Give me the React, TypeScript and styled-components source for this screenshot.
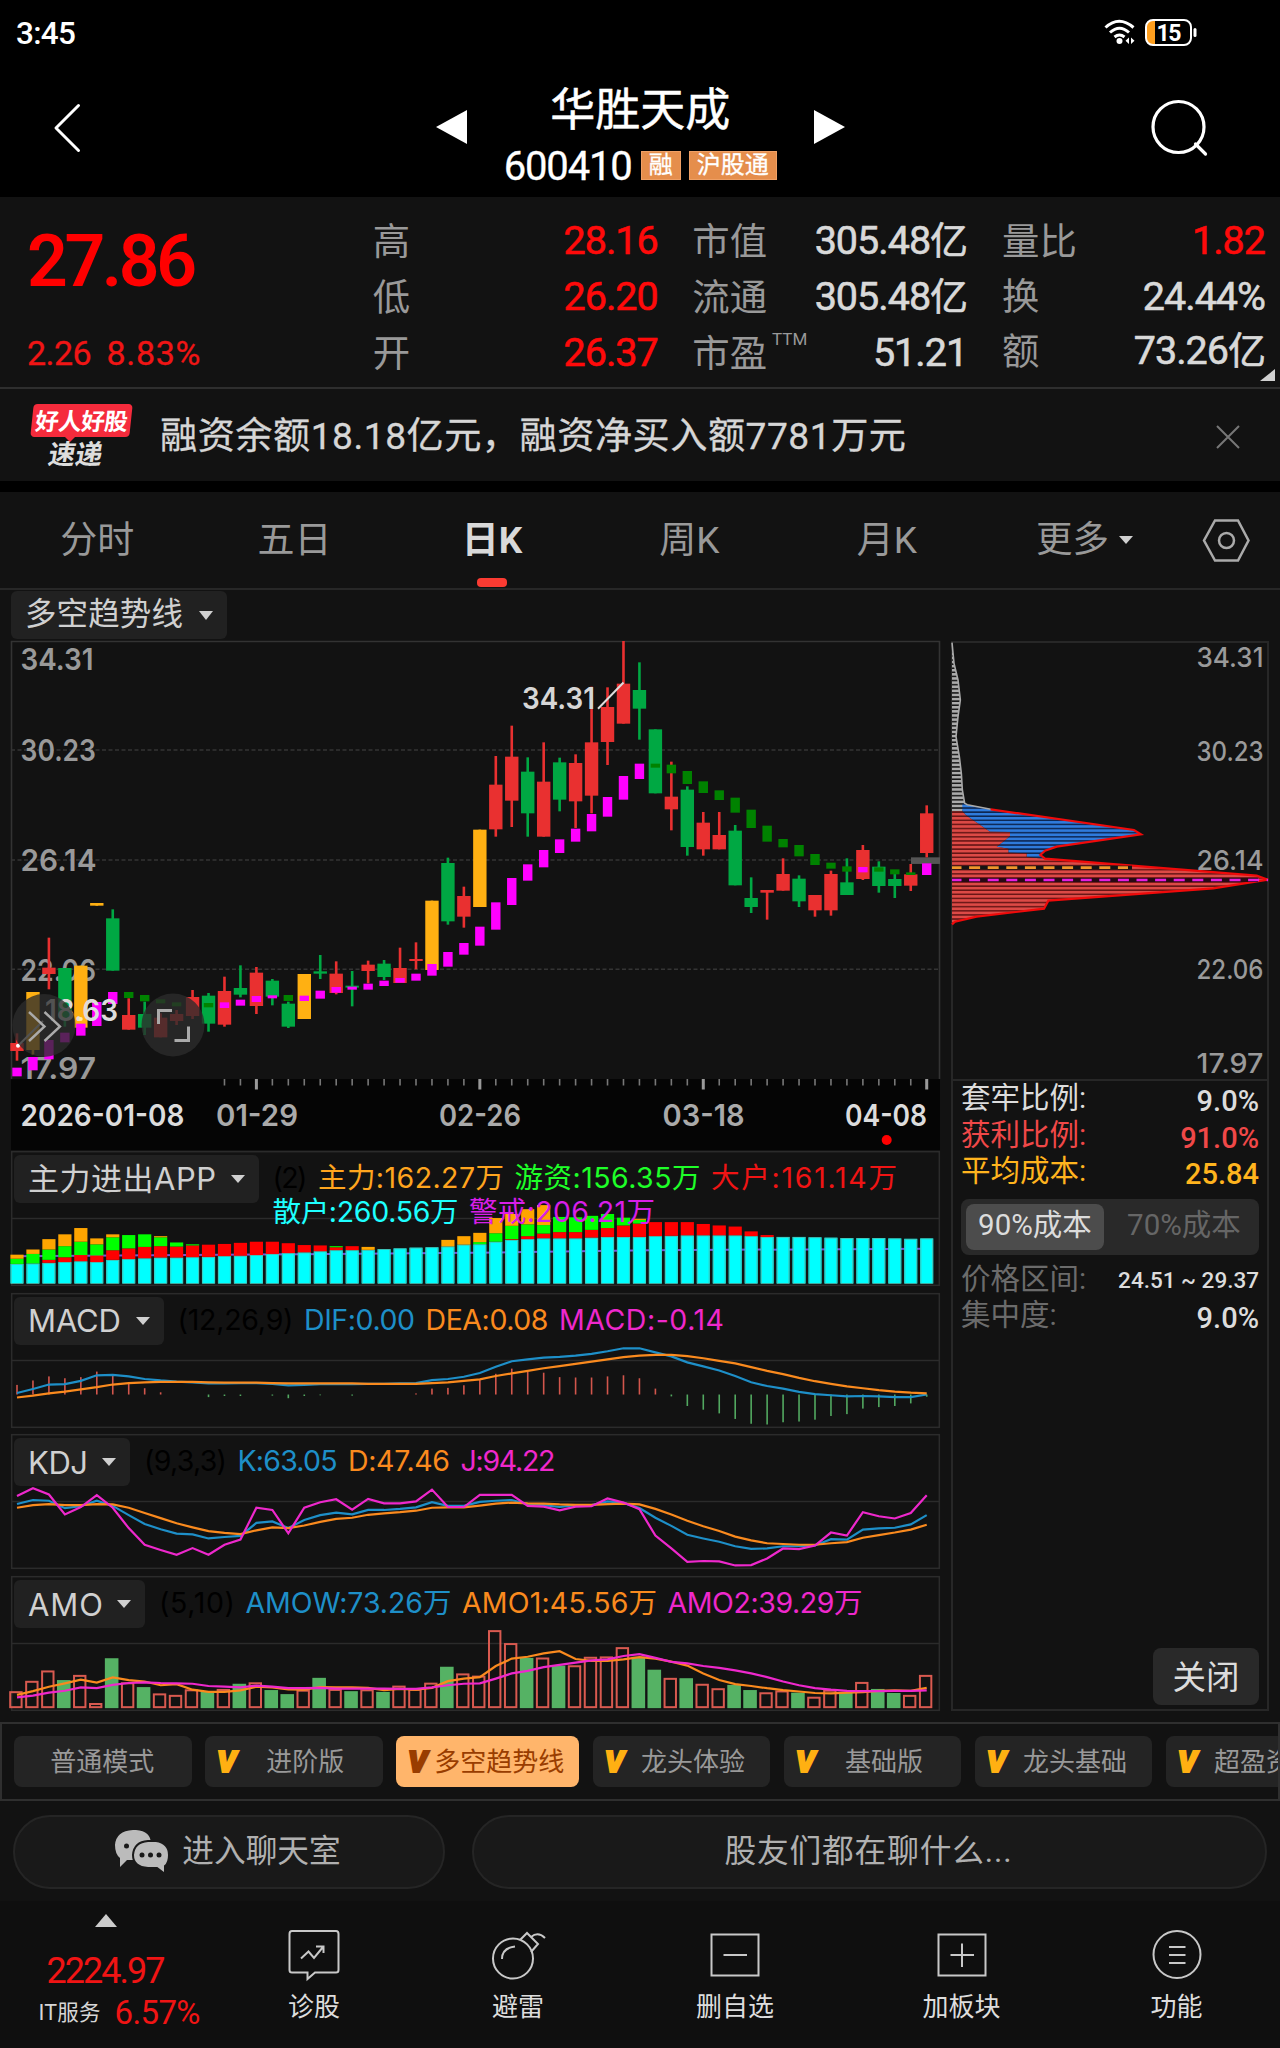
import React, { useLayoutEffect, useRef } from "react";
import styled, { createGlobalStyle } from "styled-components";

const CJK = '"Noto Sans CJK SC", sans-serif';
const DIN = `Roboto, ${CJK}`;
const GEO = `Inter, ${CJK}`;

const Global = createGlobalStyle`
  * { box-sizing: border-box; }
  html, body { margin: 0; background: #121212; }
  body { width: 1280px; height: 2048px; overflow: hidden; font-family: ${DIN}; color: #d6d6d6; }
  svg { display: block; }
`;

const Screen = styled.div`
  width: 1280px; height: 2048px; overflow: hidden;
  display: flex; flex-direction: column; background: #121212;
`;

/* Text whose tracking is adjusted so that it fills a given width. */
const FitSpan = styled.span<{ $w: number; $c?: string; $s?: number; $wt?: number; $f?: string; $lh?: number }>`
  display: inline-block; flex: none; width: ${p => p.$w}px; white-space: nowrap;
  color: ${p => p.$c ?? "inherit"};
  font-size: ${p => (p.$s ? p.$s + "px" : "inherit")};
  font-weight: ${p => p.$wt ?? "inherit"};
  font-family: ${p => p.$f ?? "inherit"};
  line-height: ${p => (p.$lh ? p.$lh + "px" : "inherit")};
`;
type FitProps = { w: number; c?: string; s?: number; wt?: number; f?: string; lh?: number; children: string };
function Fit({ w, c, s, wt, f, lh, children }: FitProps) {
  const ref = useRef<HTMLSpanElement>(null);
  useLayoutEffect(() => {
    const el = ref.current!;
    const range = document.createRange();
    range.selectNodeContents(el);
    el.style.letterSpacing = "0px";
    const natural = range.getBoundingClientRect().width;
    el.style.letterSpacing = `${(w - natural) / (children.length - 1)}px`;
  }, [w, children]);
  return <FitSpan ref={ref} $w={w} $c={c} $s={s} $wt={wt} $f={f} $lh={lh}>{children}</FitSpan>;
}

/* ---------- header ---------- */
const Header = styled.header`height: 197px; background: #000; color: #fff; display: flex; flex-direction: column;`;
const StatusBar = styled.div`
  height: 66px; padding: 0 82px 0 16px; display: flex; align-items: center; justify-content: space-between;
  font-weight: 500;
`;
const StatusIcons = styled.div`display: flex; align-items: center; gap: 9px; padding-bottom: 2px;`;
const TitleBar = styled.div`
  height: 131px; padding: 0 71px 0 52px; display: grid; align-items: center;
  grid-template-columns: 30px 354px 31px 346.5px 31px 306.5px 58px;
`;
const TitleIcon = styled.div<{ $col: number; $pt?: number }>`grid-column: ${p => p.$col}; align-self: start; padding-top: ${p => p.$pt ?? 0}px;`;
const TitleText = styled.div`grid-column: 4; align-self: start; display: flex; flex-direction: column; align-items: center; padding-top: 12px;`;
const Name = styled.div`height: 65px; line-height: 66px; font-size: 45px; font-weight: 400; -webkit-text-stroke: 0.5px #fff;`;
const CodeRow = styled.div`display: flex; align-items: center; gap: 8px; height: 46px; -webkit-text-stroke: 0.3px;`;
const Badge = styled.span<{ $w: number }>`
  width: ${p => p.$w}px; height: 29px; background: #e58e4c; border: 1px solid #efa065; color: #fff;
  display: flex; align-items: center; justify-content: center; font-size: 24px; line-height: 27px; margin-top: -2px;
`;

/* ---------- quote ---------- */
const Quote = styled.section`
  height: 192px; border-bottom: 2px solid #2e2e2e; display: flex; padding: 14px 15px 0 27px; position: relative;
`;
const PriceCol = styled.div`width: 346px; color: #f81010; display: flex; flex-direction: column;`;
const PriceBig = styled.div`height: 99px; line-height: 101px; color: #ff0000;`;
const PriceSub = styled.div`height: 86px; line-height: 87px; display: flex; gap: 15px; color: #f01515; -webkit-text-stroke: 0.3px;`;
const StatCol = styled.div<{ $w: number; $gap: number }>`width: ${p => p.$w}px; margin-right: ${p => p.$gap}px;`;
const StatRow = styled.div<{ $h?: number }>`
  height: ${p => p.$h ?? 56}px; line-height: ${p => p.$h ?? 56}px; display: flex; justify-content: space-between;
`;
const StatName = styled.span`font-size: 37.4px; color: #999; font-family: ${CJK};`;
const Sup = styled.sup`
  font-size: 17px; line-height: 16px; font-family: Roboto, sans-serif; vertical-align: 22px; margin-left: 5px;
`;
const StatValue = styled.span<{ $red?: boolean }>`
  color: ${p => (p.$red ? "#ff0a0a" : "#d9d9d9")}; font-size: 39.5px; letter-spacing: -1px;
  padding-top: 1.5px; -webkit-text-stroke: 0.6px;
  span { font-size: 38px; }
`;
const Corner = styled.i`
  position: absolute; right: 5px; bottom: 6px; width: 0; height: 0;
  border-left: 15px solid transparent; border-bottom: 12px solid #d0d0d0;
`;

/* ---------- news ---------- */
const News = styled.section`height: 92px; padding: 0 40px 0 30px; display: flex; align-items: center;`;
const Logo = styled.div`width: 103px; height: 64px; margin-right: 27px; padding-top: 1px; display: flex; flex-direction: column; align-items: center;`;
const LogoTag = styled.div`
  width: 99px; height: 33px; border-radius: 4px; background: #f52b3c; transform: skewX(-6deg);
  color: #fff; font: 700 23.5px/32px ${CJK}; text-align: center; letter-spacing: -0.5px; flex: none;
`;
const LogoTip = styled.i`border: 5px solid transparent; border-top-color: #f52b3c; border-bottom: 0; margin-left: -24px;`;
const LogoSub = styled.div`font: 700 27px/28px ${CJK}; transform: skewX(-10deg); color: #ddd; margin: -3px 12px 0 0;`;
const NewsText = styled.div`flex: 1; height: 92px; line-height: 94px; -webkit-text-stroke: 0.3px;`;
const CloseIcon = styled.svg`margin-top: 3px;`;
const Gap = styled.div`height: 11px; background: #000;`;

/* ---------- tabs ---------- */
const Tabs = styled.nav`height: 98px; border-bottom: 2px solid #272727; display: flex;`;
const Tab = styled.div<{ $on?: boolean }>`
  width: 197.4px; height: 96px; display: flex; flex-direction: column; align-items: center; padding-right: 3px;
  font-size: 37px; line-height: 98px; color: ${p => (p.$on ? "#d9d9d9" : "#999")}; font-weight: ${p => (p.$on ? 700 : 400)};
`;
const TabMark = styled.i`width: 30px; height: 9px; border-radius: 4px; background: #fb3b32; margin-top: -12px; flex: none;`;
const More = styled.div`padding-left: 49px; width: 214px; display: flex; align-items: center; font-size: 36.5px; line-height: 98px; color: #999; gap: 10px;`;
const Caret = styled.i<{ $w?: number; $h?: number }>`
  border: ${p => (p.$w ?? 14) / 2}px solid transparent; border-top: ${p => p.$h ?? 8}px solid #d0d0d0; border-bottom: 0; flex: none;
`;

/* ---------- chart area ---------- */
const Body = styled.main`height: 1121px; display: flex; padding-left: 11px; gap: 11px; flex: none;`;
const Left = styled.div`width: 929px; display: flex; flex-direction: column; flex: none;`;
const Chip = styled.div<{ $w: number; $h: number; $p: number }>`
  width: ${p => p.$w}px; height: ${p => p.$h}px; padding: 0 ${p => p.$p}px; border-radius: 6px; background: #212121; flex: none;
  display: flex; align-items: center; justify-content: space-between; white-space: nowrap; color: #d0d0d0;
`;
const ChartHead = styled.div`height: 51px; padding-top: 1px;`;
const Panels = styled.div`display: flex; flex-direction: column; gap: 6.7px; padding-top: 1px;`;
const Panel = styled.div`height: 135px; display: grid; flex: none;`;
const Layer = styled.div`grid-area: 1 / 1; min-width: 0;`;
const Legend = styled.div`display: flex; padding: 4px 0 0 3px; height: 52px; align-items: flex-start; font-family: ${GEO}; font-size: 28.5px;`;
const LegendLines = styled.div`margin-left: 14px; padding-top: 5px;`;
const LegendLine = styled.div`display: flex; gap: 10.5px; height: 34px; line-height: 36px;`;

const Side = styled.aside`
  width: 318px; height: 1070px; margin-top: 51px; border: 2px solid #272727; display: flex; flex-direction: column;
`;
const Facts = styled.div`border-top: 2px solid #272727; padding: 0 8px 0 8px; flex: 1; display: flex; flex-direction: column;`;
const Fact = styled.div<{ $c?: string; $dim?: boolean; $s?: number }>`
  height: 36.5px; line-height: 35px; display: flex; justify-content: space-between; font-size: 29.5px; flex: none;
  color: ${p => p.$c ?? "#dcdcdc"};
  span:first-child { color: ${p => (p.$dim ? "#6b6b6b" : "inherit")}; }
  span:last-child { font-weight: 500; font-size: ${p => p.$s ?? 29}px; padding-top: ${p => (p.$s ? 1 : 3)}px; }
`;
const Toggle = styled.div`height: 56px; margin: 8px 0 7px; border-radius: 8px; background: #292929; padding: 5px; display: flex; flex: none;`;
const Option = styled.div<{ $on?: boolean }>`
  width: ${p => (p.$on ? 138 : 150)}px; height: 46px; line-height: 43px; border-radius: 8px; text-align: center; font-size: 29.5px;
  background: ${p => (p.$on ? "#4c4c4c" : "none")}; color: ${p => (p.$on ? "#dcdcdc" : "#666")};
  padding-left: ${p => (p.$on ? 0 : 10)}px; flex: none;
`;
const CloseButton = styled.button`
  margin: auto 0 4px auto; width: 106px; height: 57px; border: 0; border-radius: 8px; background: #292929;
  color: #dcdcdc; font: 400 33.5px/52px ${CJK}; padding: 0 0 3px;
`;

/* ---------- modes ---------- */
const Modes = styled.div`
  height: 79px; margin-top: 11px; border: 2px solid #2f2f2f; padding-left: 12px; display: flex; align-items: center; gap: 13.3px;
  overflow: hidden; flex: none;
`;
const Mode = styled.div<{ $on?: boolean }>`
  width: ${p => (p.$on ? 183.5 : 177.7)}px; height: 51px; border-radius: 8px; flex: none; display: flex; align-items: center;
  background: ${p => (p.$on ? "#ffb56b" : "#242424")}; color: ${p => (p.$on ? "#993d00" : "#999")}; font-size: 26px;
`;
const Vip = styled.span<{ $on?: boolean }>`
  width: 39px; padding-left: 12px; margin-right: -15px; font: italic 900 30px/51px Roboto, sans-serif; flex: none;
  color: ${p => (p.$on ? "#993d00" : "#ffb012")}; -webkit-text-stroke: 2px currentColor;
`;
const ModeText = styled.span`flex: 1; text-align: center; white-space: nowrap; line-height: 52px; padding-right: 1px;`;

/* ---------- chat ---------- */
const Chat = styled.div`height: 100px; padding: 14px 13px 0; display: flex; gap: 27px; flex: none;`;
const Pill = styled.div<{ $w: number }>`
  width: ${p => p.$w}px; height: 74px; border: 2px solid #252525; border-radius: 37px; background: #191919; padding-right: 3px;
  display: flex; align-items: center; justify-content: center; gap: 12px; font-size: 31.7px; line-height: 74px; color: #b0b0b0;
`;

/* ---------- bottom nav ---------- */
const Nav = styled.footer`
  height: 147px; background: #0f0f0f; display: grid; flex: none;
  grid-template-columns: 212px 204px 204px 230px 223px 207px;
`;
const NavItem = styled.div`display: flex; flex-direction: column; align-items: center; padding-top: 27px; color: #ddd; font-size: 26px; line-height: 38px;`;
const NavIcon = styled.div`height: 60px;`;
const Index = styled.div`display: flex; flex-direction: column; align-items: center; padding-top: 13px;`;
const Up = styled.i`border: 11.5px solid transparent; border-bottom: 13px solid #ccc; border-top: 0;`;
const IndexRow = styled.div`height: 42px; line-height: 42px; display: flex; align-items: center; gap: 14px; padding-left: 27px;`;
const IndexTop = styled(IndexRow)`margin-top: 23px; padding-left: 0;`;

/* ---------- data ---------- */
const N = 58;
const cx = (i: number) => 17 + 15.96 * i;
const COLORS: Record<string, string> = { r: "#e93030", g: "#00a843", o: "#ffb012", m: "#ff00ff", d: "#008200" };

/* colour, high, body top, body bottom, low; thirds of a pixel below y = 640 */
const CANDLES: [string, number, number, number, number][] = [
  ["r", 1180, 1209, 1233, 1262], ["o", 1056, 1056, 1230, 1243], ["r", 893, 983, 1002, 1048], ["g", 984, 984, 1133, 1160],
  ["o", 977, 977, 1163, 1163], ["o", 789, 789, 797, 797], ["g", 808, 835, 992, 992], ["r", 1075, 1125, 1169, 1169],
  ["g", 1085, 1122, 1163, 1185], ["r", 1120, 1133, 1192, 1192], ["r", 1110, 1122, 1143, 1155], ["r", 1050, 1071, 1128, 1137],
  ["g", 1059, 1067, 1151, 1175], ["r", 1010, 1053, 1154, 1160], ["g", 976, 1044, 1064, 1072], ["r", 981, 998, 1098, 1122],
  ["g", 1017, 1022, 1070, 1096], ["g", 1085, 1091, 1160, 1164], ["o", 1002, 1002, 1137, 1137], ["g", 945, 994, 1001, 1017],
  ["r", 964, 1001, 1059, 1063], ["g", 993, 1037, 1043, 1099], ["r", 962, 974, 993, 1030], ["g", 960, 971, 1011, 1020],
  ["r", 923, 984, 1029, 1029], ["r", 907, 957, 963, 988], ["o", 782, 782, 990, 990], ["g", 653, 669, 844, 854],
  ["r", 740, 768, 830, 863], ["o", 569, 569, 801, 801], ["r", 348, 434, 568, 590], ["r", 257, 350, 482, 561],
  ["g", 352, 395, 520, 590], ["r", 307, 425, 590, 590], ["g", 353, 367, 479, 514], ["r", 343, 369, 484, 564],
  ["r", 140, 307, 467, 520], ["r", 142, 201, 306, 375], ["r", 3, 131, 251, 251], ["g", 67, 150, 206, 299],
  ["g", 268, 268, 460, 460], ["r", 365, 470, 508, 571], ["g", 439, 449, 621, 647], ["r", 516, 548, 628, 647],
  ["r", 516, 585, 628, 628], ["g", 555, 572, 736, 736], ["g", 712, 774, 801, 819], ["r", 750, 750, 758, 839],
  ["r", 655, 702, 752, 752], ["g", 706, 716, 784, 801], ["r", 765, 765, 811, 830], ["r", 692, 702, 811, 827],
  ["g", 655, 727, 765, 765], ["r", 615, 630, 717, 720], ["g", 664, 680, 738, 758], ["g", 700, 717, 738, 774],
  ["r", 672, 703, 737, 753], ["r", 496, 520, 639, 652],
];

const TREND: [number, string, number, number][] = [
  [0, "m", 1283, 1309], [1, "m", 1251, 1291], [2, "m", 1200, 1258], [3, "m", 1178, 1207], [4, "m", 1151, 1187], [5, "m", 1086, 1158],
  [6, "m", 1056, 1092], [7, "d", 1056, 1074], [8, "d", 1065, 1084], [9, "d", 1078, 1090], [10, "d", 1087, 1099], [12, "d", 1089, 1102],
  [13, "m", 1087, 1104], [14, "m", 1079, 1097], [15, "m", 1068, 1086], [16, "m", 1066, 1075], [17, "d", 1065, 1083], [18, "m", 1067, 1083],
  [19, "m", 1052, 1076], [20, "m", 1041, 1058], [21, "m", 1040, 1049], [22, "m", 1031, 1049], [23, "m", 1022, 1038], [24, "m", 1014, 1028],
  [25, "m", 1001, 1022], [26, "m", 972, 1007], [27, "m", 936, 980], [28, "m", 909, 944], [29, "m", 860, 917], [30, "m", 787, 869],
  [31, "m", 714, 795], [32, "m", 673, 722], [33, "m", 630, 682], [34, "m", 598, 639], [35, "m", 566, 605], [36, "m", 522, 574],
  [37, "m", 471, 530], [38, "m", 408, 479], [39, "m", 371, 417], [40, "d", 371, 383], [41, "d", 374, 400], [42, "d", 393, 432],
  [43, "d", 424, 459], [44, "d", 451, 480], [45, "d", 473, 518], [46, "d", 509, 564], [47, "d", 557, 605], [48, "d", 597, 622],
  [49, "d", 615, 649], [50, "d", 642, 675], [51, "d", 668, 686], [52, "d", 679, 695], [53, "m", 681, 697], [54, "d", 682, 695],
  [55, "d", 688, 703], [56, "d", 697, 705], [57, "m", 670, 705],
];

const ky = (v: number) => 640 + v / 3;
const py = (v: number) => 1140 + v / 2.7034;

/* tops of the stacked bars: cyan, red, green, orange */
const FLOW: number[][] = [
  [335, 335, 321, 310], [334, 334, 308, 296], [332, 324, 296, 268], [330, 317, 287, 255], [328, 311, 275, 238], [330, 312, 282, 266],
  [324, 298, 263, 255], [322, 293, 257], [320, 289, 255], [318, 287, 263, 260], [318, 288, 277], [317, 285, 282], [316, 283], [314, 281],
  [313, 278], [311, 275], [308, 275], [306, 279], [304, 284], [301, 285], [298, 290, 287], [298, 287], [297, 297, 297, 289], [295], [293],
  [291], [290], [288, 288, 288, 270], [283, 283, 283, 260], [282, 282, 276, 251], [275, 275, 252, 211], [270, 268, 232, 200],
  [268, 260, 228, 187], [266, 253, 230, 176], [266, 249, 208], [266, 249, 209], [264, 243, 205], [262, 238, 200], [262, 231, 210],
  [262, 226, 216, 213], [260, 222], [259, 222], [258, 222], [258, 227], [258, 231], [258, 234], [260, 247], [262, 257], [262], [262],
  [263], [264], [265], [265], [265], [266], [267], [266],
];
const FLOW_COLORS = ["#00ffff", "#ff0000", "#00ff00", "#ffa500"];

const MACD_BARS: Record<number, number> = {
  0: 661, 1: 649, 2: 638, 3: 643, 4: 640, 5: 625, 6: 637, 7: 656, 8: 670, 9: 681, 12: 694, 13: 691, 14: 691, 16: 690, 17: 697, 18: 691,
  19: 689, 21: 690, 25: 684, 26: 671, 27: 669, 28: 662, 29: 647, 30: 631, 31: 617, 32: 626, 33: 628, 34: 640, 35: 641, 36: 641, 37: 638,
  38: 635, 39: 643, 40: 671, 41: 692, 42: 718, 43: 728, 44: 738, 45: 753, 46: 766, 47: 768, 48: 762, 49: 760, 50: 755, 51: 745, 52: 740,
  53: 725, 54: 721, 55: 718, 56: 711, 57: 693,
};
const DIF = [683, 672, 660, 659, 650, 635, 634, 638, 645, 649, 652, 654, 657, 657, 656, 656, 658, 662, 661, 659, 659, 659, 658, 658, 657, 656,
  648, 645, 639, 629, 612, 597, 592, 587, 585, 582, 577, 570, 562, 562, 573, 584, 600, 611, 622, 637, 654, 664, 671, 680, 686, 689, 692, 691,
  692, 694, 694, 687];
const DEA = [695, 690, 684, 679, 673, 667, 660, 656, 654, 653, 653, 653, 654, 655, 655, 655, 656, 657, 657, 657, 657, 657, 658, 658, 658, 658,
  656, 654, 650, 646, 637, 630, 623, 616, 610, 604, 598, 592, 586, 582, 580, 580, 583, 589, 596, 603, 613, 623, 632, 642, 651, 658, 665, 670,
  675, 679, 682, 684];
const K = [985, 974, 976, 996, 991, 976, 990, 1015, 1039, 1053, 1065, 1067, 1078, 1074, 1071, 1036, 1032, 1050, 1028, 1015, 1008, 1013, 1001,
  1001, 998, 994, 980, 990, 990, 979, 976, 974, 985, 988, 993, 988, 988, 978, 982, 996, 1022, 1044, 1068, 1078, 1087, 1099, 1106, 1105, 1099,
  1099, 1097, 1080, 1081, 1054, 1051, 1049, 1040, 1015];
const D = [995, 988, 985, 988, 988, 985, 986, 995, 1009, 1023, 1037, 1048, 1058, 1063, 1066, 1056, 1048, 1050, 1043, 1033, 1025, 1022, 1014,
  1010, 1007, 1003, 995, 994, 994, 989, 984, 981, 983, 984, 986, 987, 987, 985, 984, 986, 998, 1013, 1030, 1045, 1058, 1073, 1083, 1091, 1093,
  1095, 1095, 1091, 1088, 1076, 1069, 1062, 1054, 1041];
const J = [963, 942, 959, 1013, 993, 961, 995, 1050, 1095, 1109, 1122, 1104, 1122, 1095, 1081, 995, 1001, 1064, 995, 980, 972, 1000, 971, 983,
  983, 978, 946, 993, 993, 960, 960, 960, 990, 992, 1002, 992, 991, 970, 981, 999, 1070, 1105, 1141, 1139, 1140, 1151, 1150, 1132, 1105, 1107,
  1097, 1062, 1070, 1007, 1018, 1024, 1009, 961];
const AMO = "r1490 r1462 r1434 g1460 r1446 r1522 g1401 r1466 g1479 r1496 r1500 r1485 g1490 r1484 g1470 r1466 g1487 g1498 r1486 g1454 r1484 g1490 r1485 g1492 r1475 r1484 r1467 g1424 r1442 r1448 r1325 r1360 g1400 r1399 g1421 r1420 r1397 r1396 r1371 g1397 g1432 r1454 g1455 r1470 r1482 g1473 g1487 r1493 r1488 g1494 r1505 r1486 g1493 r1465 g1484 g1495 r1500 r1446".split(" ");
const AMO1 = [1500, 1490, 1478, 1469, 1459, 1467, 1453, 1460, 1464, 1474, 1471, 1486, 1492, 1492, 1488, 1478, 1480, 1485, 1486, 1479, 1480, 1480,
  1481, 1487, 1484, 1486, 1481, 1463, 1456, 1452, 1422, 1402, 1397, 1388, 1382, 1403, 1408, 1408, 1404, 1398, 1402, 1410, 1421, 1442, 1460,
  1471, 1476, 1482, 1487, 1491, 1495, 1496, 1494, 1493, 1489, 1488, 1489, 1481];
const AMO2 = [1507, 1502, 1494, 1489, 1480, 1482, 1473, 1468, 1466, 1468, 1469, 1470, 1476, 1478, 1480, 1475, 1478, 1482, 1482, 1481, 1483, 1483,
  1483, 1483, 1484, 1484, 1480, 1474, 1470, 1469, 1456, 1442, 1435, 1425, 1419, 1413, 1407, 1404, 1395, 1390, 1400, 1411, 1415, 1422, 1427,
  1434, 1442, 1452, 1464, 1474, 1482, 1486, 1489, 1490, 1490, 1489, 1489, 1488];

const BLUE = "#1e8fc8", ORANGE = "#fa8a1e", PINK = "#ee28cc";

function Series({ data, color }: { data: number[]; color: string }) {
  return <polyline fill="none" stroke={color} strokeWidth={2.2} points={data.map((v, i) => `${cx(i)},${py(v)}`).join(" ")} />;
}

const AxisText = styled.text<{ $c: string; $s?: number; $w?: number }>`
  font-family: Inter, sans-serif; font-size: ${p => p.$s ?? 30.5}px; font-weight: ${p => p.$w ?? 600}; fill: ${p => p.$c};
`;
function Label({ x, y, w, c = "#999", s, wt, children }: { x: number; y: number; w: number; c?: string; s?: number; wt?: number; children: string }) {
  return <AxisText x={x} y={y} $c={c} $s={s} $w={wt} textLength={w} lengthAdjust="spacingAndGlyphs">{children}</AxisText>;
}

function CandleChart() {
  return (
    <svg width={929} height={509} viewBox="11 641 929 509" overflow="visible">
      <rect x={11} y={1079} width={929} height={71} fill="#050505" />
      <path d="M11.5 1079V641.5H939.5V1079" fill="none" stroke="#333" strokeWidth={1.6} />
      {[330, 660, 988].map(v => (
        <line key={v} x1={11} x2={940} y1={ky(v)} y2={ky(v)} stroke="#343434" strokeWidth={1.5} strokeDasharray="4 2.5" />
      ))}
      <Label x={20.5} y={669.7} w={73}>34.31</Label>
      <Label x={20.5} y={761.3} w={75.5}>30.23</Label>
      <Label x={20.5} y={871.3} w={76}>26.14</Label>
      <Label x={20.5} y={980.7} w={75.5}>22.06</Label>
      <Label x={20.5} y={1078.7} w={75.5}>17.97</Label>
      <rect x={911} y={ky(652)} width={29} height={6.6} fill="#555" />
      {CANDLES.map(([c, hi, top, bot, lo], i) => (
        <g key={i} fill={COLORS[c]}>
          <rect x={cx(i) - 1.3} y={ky(hi)} width={2.6} height={(lo - hi) / 3} />
          <rect x={cx(i) - 6.7} y={ky(top)} width={13.4} height={(bot - top) / 3} />
        </g>
      ))}
      {TREND.map(([i, c, top, bot]) => (
        <rect key={i} x={cx(i) - 4.7} y={ky(top)} width={9.4} height={(bot - top) / 3} fill={COLORS[c]} />
      ))}
      <Label x={522} y={709} w={73} c="#d6d6d6">34.31</Label>
      <line x1={598} y1={708.7} x2={623.5} y2={682.5} stroke="#ddd" strokeWidth={2} />
      <Label x={45} y={1020.7} w={73} c="#dcdcdc">18.63</Label>
      <line x1={18} y1={1045.7} x2={43} y2={1021} stroke="#ddd" strokeWidth={2} />
      <circle cx={18} cy={1045.7} r={2} fill="#fff" />
      <circle cx={80.7} cy={1019} r={2} fill="#ffe9a8" />
      <circle cx={44} cy={1025.5} r={31.5} fill="#2b2b2b" fillOpacity={0.78} />
      <path d="M29 1012L44.5 1026.5L29 1041M44.5 1012L60 1026.5L44.5 1041" fill="none" stroke="#aaa" strokeWidth={2.4} />
      <circle cx={173} cy={1025} r={31.5} fill="#2b2b2b" fillOpacity={0.78} />
      <path d="M158.5 1024V1010.5H172M188.5 1026.5V1040.5H174.5" fill="none" stroke="#aaa" strokeWidth={3} />
      {Array.from({ length: N - 13 }, (_, k) => k + 13).map(i => {
        const major = (i - 15) % 14 === 0;
        return <rect key={i} x={cx(i) - (major ? 1.5 : 0.8)} y={1079} width={major ? 3 : 1.6} height={major ? 10.5 : 6.5} fill={major ? "#999" : "#777"} />;
      })}
      <Label x={20.5} y={1125.7} w={164} c="#dcdcdc">2026-01-08</Label>
      <Label x={216} y={1125.7} w={82} c="#aaa">01-29</Label>
      <Label x={439} y={1125.7} w={82} c="#aaa">02-26</Label>
      <Label x={662.5} y={1125.7} w={82} c="#aaa">03-18</Label>
      <Label x={845} y={1125.7} w={82} c="#dcdcdc">04-08</Label>
      <circle cx={886.7} cy={1140} r={5} fill="#ff0000" />
    </svg>
  );
}

function Frame({ top, children }: { top: number; children: React.ReactNode }) {
  return (
    <svg width={929} height={135} viewBox={`11 ${top} 929 135`} overflow="visible">
      <rect x={11.7} y={top + 0.7} width={927.6} height={133.6} fill="none" stroke="#2b2b2b" strokeWidth={1.5} />
      <line x1={11} x2={940} y1={top + 67.5} y2={top + 67.5} stroke="#2b2b2b" strokeWidth={1.5} />
      {children}
    </svg>
  );
}

function FlowChart() {
  const base = py(388);
  return (
    <Frame top={1151}>
      <polyline points={`11,${py(314)} 300,${py(309)} 500,${py(304)} 650,${py(298)} 926,${py(294)}`} fill="none" stroke="#7a52d8" strokeWidth={2} />
      {FLOW.map((tops, i) => {
        let from = base;
        return tops.map((t, k) => {
          const y = py(t), h = from - y;
          from = y;
          return h > 0 ? <rect key={`${i}-${k}`} x={cx(i) - 6.6} y={y} width={13.2} height={h} fill={FLOW_COLORS[k]} /> : null;
        });
      })}
      {FLOW.map(([t], i) => (
        <rect key={i} x={cx(i) - 5.8} y={py(t) + 0.5} width={11.6} height={base - py(t) - 0.5} fill="none" stroke="#55b5a5" strokeWidth={0.7} />
      ))}
    </Frame>
  );
}

function MacdChart() {
  return (
    <Frame top={1292.6}>
      {Object.entries(MACD_BARS).map(([k, v]) => {
        const x = cx(Number(k)), a = Math.min(v, 687), b = Math.max(v, 687);
        return <rect key={k} x={x - 0.8} y={py(a)} width={1.6} height={py(b) - py(a)} fill={v < 687 ? "#d2564c" : "#52a860"} />;
      })}
      <Series data={DIF} color={BLUE} />
      <Series data={DEA} color={ORANGE} />
    </Frame>
  );
}

function KdjChart() {
  return (
    <Frame top={1434.3}>
      <Series data={K} color={BLUE} />
      <Series data={D} color={ORANGE} />
      <Series data={J} color={PINK} />
    </Frame>
  );
}

function AmoChart() {
  const base = py(1536);
  return (
    <Frame top={1576}>
      {AMO.map((s, i) => {
        const y = py(Number(s.slice(1))), x = cx(i) - 1.1;
        return s[0] === "g"
          ? <rect key={i} x={x - 6.8} y={y} width={13.6} height={base - y} fill="#55b264" />
          : <rect key={i} x={x - 5.7} y={y + 1} width={11.4} height={base - y - 2} fill="none" stroke="#d95a50" strokeWidth={2} />;
      })}
      <Series data={AMO1} color={ORANGE} />
      <Series data={AMO2} color={PINK} />
    </Frame>
  );
}

const poly = (pts: number[][]) => pts.map(([x, y]) => `${930 + x / 3},${640 + y / 3}`).join(" ");
const GREY_EDGE = [[66, 8], [72, 70], [84, 120], [91, 180], [84, 230], [78, 290], [88, 350], [94, 400], [97, 450], [104, 490], [112, 494], [182, 508]];
const RED_EDGE = [[182, 508], [612, 570], [633, 583], [380, 620], [345, 632], [331, 645], [345, 656], [980, 707], [1014, 719], [850, 745], [355, 782], [342, 806], [140, 830], [75, 845], [66, 853]];
const INNER = [[97, 514], [108, 526], [125, 538], [145, 551], [180, 575], [240, 576], [240, 588], [225, 601], [200, 620], [235, 626], [235, 638], [290, 640], [290, 651], [340, 656]];

function Distribution() {
  const stripes = (id: string, bright: string, dark: string) => (
    <pattern id={id} x={0} y={640 + 679 / 3} width={8} height={37 / 9} patternUnits="userSpaceOnUse">
      <rect width={8} height={37 / 9} fill={dark} />
      <rect width={8} height={2.6} fill={bright} />
    </pattern>
  );
  return (
    <svg width={314} height={436} viewBox="953 643 314 436" overflow="visible">
      <defs>
        {stripes("grey", "#aaa", "#141414")}
        {stripes("red", "#dc4a46", "#641414")}
        {stripes("blue", "#2f7bdc", "#0c2550")}
      </defs>
      <polygon points={poly([[66, 8], ...GREY_EDGE.slice(0, 10), [97, 514], [66, 514]])} fill="url(#grey)" />
      <polygon points={poly([[97, 490], [112, 494], ...RED_EDGE.slice(0, 6), ...INNER.slice().reverse()])} fill="url(#blue)" />
      <polygon points={poly([[66, 514], ...INNER, ...RED_EDGE.slice(6)])} fill="url(#red)" />
      <polyline points={poly(GREY_EDGE)} fill="none" stroke="#aaa" strokeWidth={1.6} />
      <polyline points={poly(RED_EDGE)} fill="none" stroke="#f00a0a" strokeWidth={2.2} />
      <rect x={952} y={ky(677)} width={180} height={4} fill="#141414" />
      <line x1={952} x2={1128} y1={ky(683)} y2={ky(683)} stroke="#f0962c" strokeWidth={2.6} strokeDasharray="11 7.6" strokeDashoffset={1.5} />
      <rect x={952} y={ky(714)} width={306} height={4} fill="#2a0a14" />
      <line x1={952} x2={1268} y1={ky(720)} y2={ky(720)} stroke="#e81ee0" strokeWidth={2.6} strokeDasharray="11 7.6" strokeDashoffset={1.5} />
      {[["34.31", 666.5], ["30.23", 760.5], ["26.14", 870.3], ["22.06", 979], ["17.97", 1072.5]].map(([t, y]) => (
        <Label key={t} x={1196.5} y={y as number} w={67} s={27} wt={450} c="#9a9a9a">{t as string}</Label>
      ))}
    </svg>
  );
}

const MODES: [string, boolean, boolean][] = [
  ["普通模式", false, false], ["进阶版", true, false], ["多空趋势线", true, true], ["龙头体验", true, false],
  ["基础版", true, false], ["龙头基础", true, false], ["超盈资金", true, false],
];

type LegendItem = [string, number, string];
function IndicatorPanel({ name, nameW, chipW, lines, children }: { name: string; nameW: number; chipW: number; lines: LegendItem[][]; children: React.ReactNode }) {
  return (
    <Panel>
      <Layer>{children}</Layer>
      <Layer>
        <Legend>
          <Chip $w={chipW} $h={48} $p={14}>
            <Fit w={nameW} s={31} lh={47}>{name}</Fit>
            <Caret $w={14} $h={8} />
          </Chip>
          <LegendLines>
            {lines.map((line, k) => (
              <LegendLine key={k}>
                {line.map(([t, w, c]) => <Fit key={t} w={w} c={c}>{t}</Fit>)}
              </LegendLine>
            ))}
          </LegendLines>
        </Legend>
      </Layer>
    </Panel>
  );
}

const line = { fill: "none", stroke: "#c8c8c8", strokeWidth: 2 };

export default function App() {
  return (
    <Screen>
      <Global />
      <Header>
        <StatusBar>
          <Fit w={60} s={31.5}>3:45</Fit>
          <StatusIcons>
            <svg width={32} height={26} viewBox="0 0 32 26" fill="none" stroke="#fff" strokeWidth={3}>
              <path d="M1.5 8.5Q15 -4 29.5 8.5M6 13.5Q15.5 5 25 13.5M10.5 18Q15.5 14 20.5 18" />
              <circle cx="15.5" cy="22" r="3" fill="#fff" stroke="none" />
              <path d="M25 18.5V25L21.5 21.8ZM27 18.5V25L30.5 21.8Z" fill="#fff" stroke="none" />
            </svg>
            <svg width={53} height={27} viewBox="0 0 53 27">
              <path d="M10 1.5H8Q1.5 1.5 1.5 8V19Q1.5 25.5 8 25.5H10Z" fill="#ff9f1e" />
              <rect x="1" y="1" width="45" height="25" rx="7" fill="none" stroke="#fff" strokeWidth="2" />
              <rect x="48.5" y="9" width="3" height="9" rx="1.5" fill="#fff" />
              <text x="11.5" y="21.5" fontFamily="Roboto" fontSize="23" fontWeight="700" fill="#fff" textLength="25">15</text>
            </svg>
          </StatusIcons>
        </StatusBar>
        <TitleBar>
          <TitleIcon $col={1} $pt={37}>
            <svg width={30} height={50} viewBox="0 0 30 50"><path d="M26.5 2.5L4 25L26.5 47.5" fill="none" stroke="#fff" strokeWidth={3} strokeLinecap="round" strokeLinejoin="round" /></svg>
          </TitleIcon>
          <TitleIcon $col={3} $pt={44}><svg width={31} height={34}><path d="M31 0V34L0 17Z" fill="#fff" /></svg></TitleIcon>
          <TitleText>
            <Name>华胜天成</Name>
            <CodeRow>
              <Fit w={129} s={40}>600410</Fit>
              <Badge $w={40}>融</Badge>
              <Badge $w={88}>沪股通</Badge>
            </CodeRow>
          </TitleText>
          <TitleIcon $col={5} $pt={44}><svg width={31} height={34}><path d="M0 0V34L31 17Z" fill="#fff" /></svg></TitleIcon>
          <TitleIcon $col={7} $pt={33}>
            <svg width={58} height={58} viewBox="0 0 58 58" fill="none" stroke="#fff" strokeWidth={3.2}>
              <circle cx={27.5} cy={28} r={25.5} /><path d="M44.5 45L54.5 55" strokeLinecap="round" />
            </svg>
          </TitleIcon>
        </TitleBar>
      </Header>

      <Quote>
        <PriceCol>
          <PriceBig><Fit w={170} s={71.5} wt={600}>27.86</Fit></PriceBig>
          <PriceSub><Fit w={64.5} s={34}>2.26</Fit><Fit w={94} s={34}>8.83%</Fit></PriceSub>
        </PriceCol>
        <StatCol $w={285} $gap={34.5}>
          <StatRow><StatName>高</StatName><StatValue $red>28.16</StatValue></StatRow>
          <StatRow><StatName>低</StatName><StatValue $red>26.20</StatValue></StatRow>
          <StatRow><StatName>开</StatName><StatValue $red>26.37</StatValue></StatRow>
        </StatCol>
        <StatCol $w={275} $gap={35}>
          <StatRow><StatName>市值</StatName><StatValue>305.48<span>亿</span></StatValue></StatRow>
          <StatRow><StatName>流通</StatName><StatValue>305.48<span>亿</span></StatValue></StatRow>
          <StatRow><StatName>市盈<Sup>TTM</Sup></StatName><StatValue>51.21</StatValue></StatRow>
        </StatCol>
        <StatCol $w={263} $gap={0}>
          <StatRow><StatName>量比</StatName><StatValue $red>1.82</StatValue></StatRow>
          <StatRow $h={55}><StatName>换</StatName><StatValue>24.44%</StatValue></StatRow>
          <StatRow $h={54}><StatName>额</StatName><StatValue>73.26<span>亿</span></StatValue></StatRow>
        </StatCol>
        <Corner />
      </Quote>

      <News>
        <Logo><LogoTag>好人好股</LogoTag><LogoTip /><LogoSub>速递</LogoSub></Logo>
        <NewsText><Fit w={746} s={37.2}>融资余额18.18亿元，融资净买入额7781万元</Fit></NewsText>
        <CloseIcon width={24} height={24}><path d="M1 1L23 23M23 1L1 23" stroke="#777" strokeWidth={2} /></CloseIcon>
      </News>
      <Gap />

      <Tabs>
        <Tab>分时</Tab>
        <Tab>五日</Tab>
        <Tab $on>日K<TabMark /></Tab>
        <Tab>周K</Tab>
        <Tab>月K</Tab>
        <More>更多<Caret /></More>
        <svg width={50} height={96} viewBox="0 0 50 96" fill="none" stroke="#aaa" strokeWidth={2.5}>
          <path d="M14 28.5H37L47.5 48.5L37 68.5H14L3 48.5Z" /><circle cx={25.5} cy={48.5} r={7.5} />
        </svg>
      </Tabs>

      <Body>
        <Left>
          <ChartHead>
            <Chip $w={216} $h={48} $p={14}><Fit w={158} s={31.5} lh={50}>多空趋势线</Fit><Caret $w={14} $h={9} /></Chip>
          </ChartHead>
          <CandleChart />
          <Panels>
            <IndicatorPanel name="主力进出APP" nameW={188} chipW={244.5} lines={[
              [["(2)", 35, "#000"], ["主力:162.27万", 186, "#ffa51e"], ["游资:156.35万", 186, "#1eff28"], ["大户:161.14万", 186, "#f01414"]],
              [["散户:260.56万", 186, "#1effff"], ["警戒:206.21万", 186, "#d81ee8"]],
            ]}><FlowChart /></IndicatorPanel>
            <IndicatorPanel name="MACD" nameW={93} chipW={149.5} lines={[
              [["(12,26,9)", 116, "#000"], ["DIF:0.00", 111, BLUE], ["DEA:0.08", 123, ORANGE], ["MACD:-0.14", 165, PINK]],
            ]}><MacdChart /></IndicatorPanel>
            <IndicatorPanel name="KDJ" nameW={60} chipW={116} lines={[
              [["(9,3,3)", 83, "#000"], ["K:63.05", 100, BLUE], ["D:47.46", 102, ORANGE], ["J:94.22", 95, PINK]],
            ]}><KdjChart /></IndicatorPanel>
            <IndicatorPanel name="AMO" nameW={75} chipW={131} lines={[
              [["(5,10)", 76, "#000"], ["AMOW:73.26万", 206, BLUE], ["AMO1:45.56万", 195, ORANGE], ["AMO2:39.29万", 195, PINK]],
            ]}><AmoChart /></IndicatorPanel>
          </Panels>
        </Left>
        <Side>
          <Distribution />
          <Facts>
            <Fact><span>套牢比例:</span><span>9.0%</span></Fact>
            <Fact $c="#f04848"><span>获利比例:</span><span>91.0%</span></Fact>
            <Fact $c="#ffb41e"><span>平均成本:</span><span>25.84</span></Fact>
            <Toggle><Option $on>90%成本</Option><Option>70%成本</Option></Toggle>
            <Fact $dim $s={22.5}><span>价格区间:</span><span>24.51 ~ 29.37</span></Fact>
            <Fact $dim><span>集中度:</span><span>9.0%</span></Fact>
            <CloseButton>关闭</CloseButton>
          </Facts>
        </Side>
      </Body>

      <Modes>
        {MODES.map(([t, vip, on]) => (
          <Mode key={t} $on={on}>{vip && <Vip $on={on}>V</Vip>}<ModeText>{t}</ModeText></Mode>
        ))}
      </Modes>

      <Chat>
        <Pill $w={432}>
          <svg width={56} height={46} viewBox="0 0 56 46">
            <path d="M19 1H22Q37 2 37 15V27Q28 32 20 31L13 31L6 38V29Q1 25 1 16Q2 2 19 1Z" fill="#bbb" />
            <circle cx={12.5} cy={17} r={2.5} fill="#191919" />
            <path d="M34 12H42Q55 14 55 26Q55 34 51 37V45L43 39H34Q19 38 19 26Q20 13 34 12Z" fill="#bbb" stroke="#191919" strokeWidth={2} />
            <circle cx={28} cy={26} r={2.5} fill="#191919" /><circle cx={36.5} cy={26} r={2.5} fill="#191919" /><circle cx={45} cy={26} r={2.5} fill="#191919" />
          </svg>
          进入聊天室
        </Pill>
        <Pill $w={795}><Fit w={287} s={31.7}>股友们都在聊什么...</Fit></Pill>
      </Chat>

      <Nav>
        <Index>
          <Up />
          <IndexTop><Fit w={119} s={36} c="#f01414">2224.97</Fit></IndexTop>
          <IndexRow><Fit w={62} s={21.5}>IT服务</Fit><Fit w={86} s={33} c="#f01414">6.57%</Fit></IndexRow>
        </Index>
        <NavItem>
          <NavIcon><svg width={54} height={54} viewBox="0 0 54 54" {...line}>
            <path d="M5 3H49Q51.5 3 51.5 6V42Q51.5 44.5 49 44.5H28L20.5 51V44.5H5Q2.5 44.5 2.5 42V6Q2.5 3 5 3Z" />
            <path d="M14 30.5L21.5 23.5L27 30L36 19M29 18.5H36.5V25" />
          </svg></NavIcon>诊股
        </NavItem>
        <NavItem>
          <NavIcon><svg width={56} height={54} viewBox="0 0 56 54" {...line}>
            <circle cx={23} cy={30.5} r={20} /><path d="M12 31Q12 20 25 18.5" />
            <path d="M30 12L37 5L48 16L41 24M41 9Q48 3 55 10" />
          </svg></NavIcon>避雷
        </NavItem>
        <NavItem>
          <NavIcon><svg width={54} height={54} viewBox="0 0 54 54" {...line}><rect x={3.5} y={6.5} width={47} height={41} /><path d="M15.5 27H39" /></svg></NavIcon>删自选
        </NavItem>
        <NavItem>
          <NavIcon><svg width={54} height={54} viewBox="0 0 54 54" {...line}><rect x={3.5} y={6.5} width={47} height={41} /><path d="M15.5 27H39M27 15.5V39" /></svg></NavIcon>加板块
        </NavItem>
        <NavItem>
          <NavIcon><svg width={54} height={54} viewBox="0 0 54 54" {...line}><circle cx={27} cy={26.5} r={23.5} /><path d="M19 19H35.5M19 27H35.5M19 35H35.5" /></svg></NavIcon>功能
        </NavItem>
      </Nav>
    </Screen>
  );
}
